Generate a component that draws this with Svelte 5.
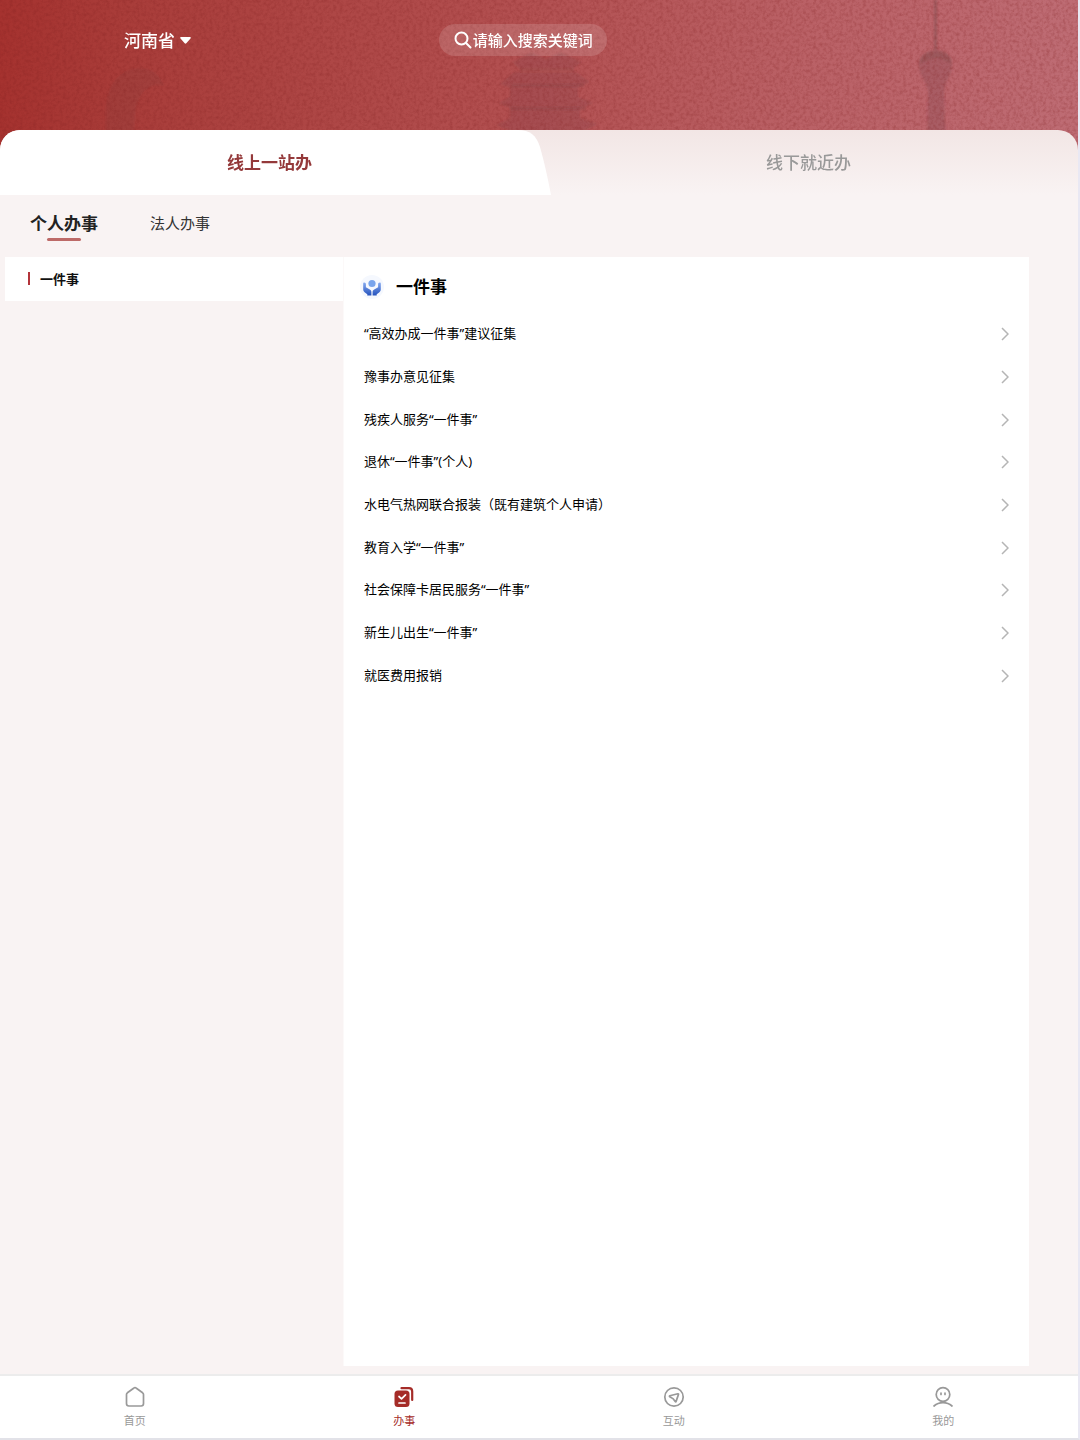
<script lang="ts">
  const regions = ['河南省'];
  const channels = ['线上一站办', '线下就近办'];
  const audiences = ['个人办事', '法人办事'];
  const categories = ['一件事'];

  const services = [
    '“高效办成一件事”建议征集',
    '豫事办意见征集',
    '残疾人服务“一件事”',
    '退休“一件事”(个人)',
    '水电气热网联合报装（既有建筑个人申请）',
    '教育入学“一件事”',
    '社会保障卡居民服务“一件事”',
    '新生儿出生“一件事”',
    '就医费用报销',
  ];

  const navItems = [
    { id: 'home', label: '首页' },
    { id: 'service', label: '办事' },
    { id: 'interact', label: '互动' },
    { id: 'mine', label: '我的' },
  ];

  let region = $state('河南省');
  let keyword = $state('');
  let channel = $state(0);
  let audience = $state(0);
  let category = $state(0);
  let currentNav = $state('service');
</script>

<div class="page">
  <header class="hero">
    <svg class="hero-bg" viewBox="0 0 1078 150" preserveAspectRatio="xMidYMin slice" aria-hidden="true">
      <defs>
        <linearGradient id="hero-red" x1="0" y1="0" x2="1" y2="0">
          <stop offset="0" stop-color="#a5322f" />
          <stop offset="0.12" stop-color="#a93d3a" />
          <stop offset="0.5" stop-color="#b35152" />
          <stop offset="0.75" stop-color="#ba6166" />
          <stop offset="1" stop-color="#be6c74" />
        </linearGradient>
        <filter id="grain" x="0" y="0" width="100%" height="100%" color-interpolation-filters="sRGB">
          <feTurbulence type="fractalNoise" baseFrequency="0.3" numOctaves="3" seed="4" />
          <feColorMatrix values="0 0 0 0 0.5  0 0 0 0 0.12  0 0 0 0 0.12  0.6 0 0 0 -0.24" />
        </filter>
        <filter id="haze" x="-20%" y="-20%" width="140%" height="140%">
          <feGaussianBlur stdDeviation="1" />
        </filter>
      </defs>
      <rect width="1078" height="150" fill="url(#hero-red)" />
      <g fill="#6d4346" filter="url(#haze)">
        <path d="M106 150V106c2-24 16-38 34-38 12 0 20 6 24 18-14-4-24 6-28 22l-4 42z" opacity="0.13" />
        <path d="M532 52l14 7 14-7 22 10-8 6h-56l-6-6zM514 72h62l14 10-12 5v10l16 6-14 6v9l18 6-14 7v22h-74v-22l-14-6 14-7v-10l-12-5 12-6V88l-10-4z" opacity="0.17" />
        <path d="M512 84h72v3h-72zM510 107h76v3h-76zM520 68h54v3h-54z" opacity="0.2" />
        <path d="M934 0h3v50h-3z" opacity="0.4" />
        <path d="M919 65c0-9 8-14 17-14s16 5 16 14c0 11-6 13-8 27l2 58h-19l1-58c-2-14-9-16-9-27z" opacity="0.24" />
        <path d="M919 64c0-9 8-14 17-14s16 5 16 14l-6-3c-6-4-14-4-20 0z" opacity="0.22" />
      </g>
      <rect width="1078" height="150" filter="url(#grain)" />
    </svg>

    <div class="hero-bar">
      <label class="region">
        <select bind:value={region} aria-label="地区">
          {#each regions as name}
            <option value={name}>{name}</option>
          {/each}
        </select>
        <svg width="11" height="7" viewBox="0 0 11 7" aria-hidden="true">
          <path d="M1 0h9c1 0 1 1 .5 1.500L6.300 6.200c-.5.6-1.100.6-1.600 0L.5 1.500C0 1 0 0 1 0z" fill="#fff" />
        </svg>
      </label>

      <label class="search">
        <svg width="18" height="18" viewBox="0 0 18 18" fill="none" stroke="#fff" stroke-width="2" stroke-linecap="round" aria-hidden="true">
          <circle cx="7.500" cy="7.500" r="6" />
          <path d="M12 12l4.500 4.500" />
        </svg>
        <input type="text" bind:value={keyword} placeholder="请输入搜索关键词" aria-label="搜索" />
      </label>
    </div>

    <div class="channels" role="tablist">
      {#each channels as name, i}
        <button class="channel" class:active={channel === i} role="tab" aria-selected={channel === i} onclick={() => (channel = i)}>
          {name}
          {#if channel === i && i === 0}
            <svg class="slant" viewBox="0 0 36 65" preserveAspectRatio="none" aria-hidden="true">
              <path d="M0 0h3c12 0 18 5 22 17 4 14 8 32 11 48H0z" fill="#fff" />
            </svg>
          {/if}
        </button>
      {/each}
    </div>
  </header>

  <div class="audiences" role="tablist">
    {#each audiences as name, i}
      <button class="audience" class:active={audience === i} role="tab" aria-selected={audience === i} onclick={() => (audience = i)}>
        {name}
      </button>
    {/each}
  </div>

  <div class="body">
    <aside class="sidebar">
      {#each categories as name, i}
        <button class="category" class:active={category === i} onclick={() => (category = i)}>{name}</button>
      {/each}
    </aside>

    <main class="panel">
      <h2>
        <svg width="24" height="24" viewBox="0 0 24 24" aria-hidden="true">
          <defs>
            <linearGradient id="hands-blue" x1="0" y1="0" x2="0" y2="1">
              <stop offset="0" stop-color="#86aaf0" />
              <stop offset="1" stop-color="#2452bd" />
            </linearGradient>
          </defs>
          <circle cx="12" cy="12" r="12" fill="#f5f8fe" />
          <circle cx="12" cy="8.500" r="3.600" fill="#78a4ec" />
          <path d="M4.200 7.500c1.200 0 1.700.8 1.700 1.800v3l3.900 2.200c1 .6 1.600 1.400 1.600 2.500v3.500H7.300v-1.300l-2.400-1.800C3.700 16.500 3.200 15.600 3.200 14.200V8.600c0-.7.400-1.100 1-1.100z" fill="url(#hands-blue)" />
          <path d="M19.800 7.500c-1.200 0-1.700.8-1.700 1.800v3l-3.900 2.200c-1 .6-1.600 1.400-1.600 2.500v3.500h4.100v-1.300l2.400-1.800c1.200-.9 1.700-1.800 1.700-3.200V8.600c0-.7-.4-1.100-1-1.100z" fill="url(#hands-blue)" />
        </svg>
        <span>{categories[category]}</span>
      </h2>
      <ul>
        {#each services as name}
          <li>
            <a href="#service">
              <span>{name}</span>
              <svg width="8" height="14" viewBox="0 0 8 14" fill="none" stroke="#b5b5b5" stroke-width="1.500" aria-hidden="true">
                <path d="M1 1l6 6-6 6" />
              </svg>
            </a>
          </li>
        {/each}
      </ul>
    </main>
  </div>

  <nav class="tabbar">
    {#each navItems as item}
      <a href="#{item.id}" class:active={currentNav === item.id} onclick={() => (currentNav = item.id)}>
        <svg width="22" height="22" viewBox="0 0 22 22" fill="none" stroke="currentColor" stroke-width="1.700" stroke-linecap="round" stroke-linejoin="round" aria-hidden="true">
          {#if item.id === 'home'}
            <path d="M9.600 2.200L3.400 6.800c-.6.5-.9 1-.9 1.800v9c0 1.500.9 2.400 2.400 2.400h12.200c1.500 0 2.400-.9 2.400-2.400v-9c0-.8-.3-1.300-.9-1.800l-6.200-4.600c-.9-.7-1.900-.7-2.800 0z" />
          {:else if item.id === 'service'}
            <path d="M8.500 2.200h7.500c2 0 3.200 1.200 3.200 3.200V14" stroke-width="2.200" />
            <rect x="1.500" y="4.500" width="15" height="16.500" rx="3.500" fill="currentColor" stroke="none" />
            <path d="M6 10.500l2.500 2.300 4-4M6 17h6" stroke="#fff" />
          {:else if item.id === 'interact'}
            <circle cx="11" cy="11" r="9.200" />
            <path d="M6.800 9.800l8-2c.5-.1.800.2.700.6l-2.400 7c-.2.500-.6.5-.9.100l-1.900-2.600-3.500-2.200c-.5-.3-.5-.7 0-.9z" />
          {:else}
            <circle cx="11" cy="8.500" r="6.800" />
            <path d="M9 7v1.500M13 7v1.500M2 20c5-4.600 13-4.600 18 0" />
          {/if}
        </svg>
        <span>{item.label}</span>
      </a>
    {/each}
  </nav>
</div>

<style>
  :global(body) {
    background: #fff;
  }

  .page {
    display: flex;
    flex-direction: column;
    box-sizing: border-box;
    min-height: 100vh;
    border-right: 2px solid #e9e8f3;
    border-bottom: 2px solid #e2e2e8;
    background: #f9f3f3;
    color: #111;
    font-family: 'Noto Sans', 'Noto Sans CJK SC', sans-serif;
  }

  button,
  select,
  input {
    margin: 0;
    padding: 0;
    border: 0;
    background: none;
    color: inherit;
    font: inherit;
  }

  button {
    cursor: pointer;
  }

  svg {
    display: block;
    flex: none;
  }

  .hero {
    position: relative;
  }

  .hero-bg {
    position: absolute;
    top: 0;
    left: 0;
    width: 100%;
    height: 150px;
  }

  .hero-bar {
    position: relative;
    display: flex;
    align-items: center;
    box-sizing: border-box;
    height: 130px;
    padding: 0 0 50px 124px;
    color: #fff;
  }

  .region {
    display: flex;
    align-items: center;
    gap: 5px;
    width: 33%;
    font-size: 17px;
    font-weight: 500;
  }

  .region select {
    appearance: none;
    outline: none;
  }

  .search {
    display: flex;
    align-items: center;
    gap: 1px;
    box-sizing: border-box;
    height: 32px;
    padding: 0 14px 0 15px;
    border-radius: 16px;
    background: rgba(255, 255, 255, 0.14);
    font-size: 15px;
    font-weight: 500;
  }

  .search input {
    width: 120px;
    outline: none;
  }

  .search input::placeholder {
    color: #fff;
    opacity: 1;
  }

  .channels {
    position: relative;
    display: flex;
    height: 65px;
    border-radius: 20px 20px 0 0;
    background: linear-gradient(#f2e6e5, #f9f3f3);
  }

  .channel {
    position: relative;
    flex: 1;
    padding-bottom: 2px;
    color: #999;
    font-size: 17px;
    font-weight: 500;
  }

  .channel.active {
    border-radius: 20px 20px 0 0;
    background: linear-gradient(#fff, #fff) no-repeat left / calc(100% - 23px) 100%;
    color: #94393a;
    font-weight: 700;
  }

  .slant {
    position: absolute;
    top: 0;
    right: -12px;
    width: 36px;
    height: 100%;
  }

  .audiences {
    display: flex;
    align-items: center;
    gap: 52px;
    box-sizing: border-box;
    height: 62px;
    padding: 0 0 8px 30px;
  }

  .audience {
    position: relative;
    height: 38px;
    color: #333;
    font-size: 15px;
  }

  .audience.active {
    color: #222;
    font-size: 17px;
    font-weight: 700;
  }

  .audience.active::after {
    content: '';
    position: absolute;
    bottom: 0;
    left: 25%;
    width: 50%;
    height: 3px;
    border-radius: 2px;
    background: #bd6a68;
  }

  .body {
    display: flex;
    flex: 1;
    padding: 0 49px 8px 5px;
  }

  .sidebar {
    width: 33%;
  }

  .category {
    display: flex;
    align-items: center;
    gap: 10px;
    box-sizing: border-box;
    width: 100%;
    height: 44px;
    padding: 0 0 2px 23px;
    font-size: 13px;
    text-align: left;
  }

  .category.active {
    background: #fff;
    font-weight: 700;
  }

  .category.active::before {
    content: '';
    width: 2px;
    height: 13px;
    background: #b3343a;
  }

  .panel {
    flex: 1;
    box-sizing: border-box;
    padding: 14px 20px;
    border-left: 1px solid #fcf9f9;
    background: #fff;
  }

  h2 {
    display: flex;
    align-items: center;
    gap: 12px;
    height: 32px;
    margin: 0 0 10px -4px;
    color: #000;
    font-size: 17px;
    font-weight: 700;
  }

  h2 span,
  li span {
    padding-bottom: 3px;
  }

  ul {
    display: grid;
    grid-auto-rows: 1fr;
    min-height: 384px;
    margin: 0;
    padding: 0;
    list-style: none;
  }

  li a {
    display: flex;
    align-items: center;
    justify-content: space-between;
    height: 100%;
    color: #000;
    font-size: 13px;
    text-decoration: none;
  }

  .tabbar {
    display: flex;
    box-sizing: border-box;
    height: 64px;
    border-top: 2px solid #ececec;
    background: #fff;
  }

  .tabbar a {
    display: flex;
    flex: 1;
    flex-direction: column;
    align-items: center;
    gap: 4px;
    padding-top: 10px;
    color: #999;
    font-size: 11px;
    line-height: 18px;
    text-decoration: none;
  }

  .tabbar a.active {
    color: #a52c28;
  }
</style>
